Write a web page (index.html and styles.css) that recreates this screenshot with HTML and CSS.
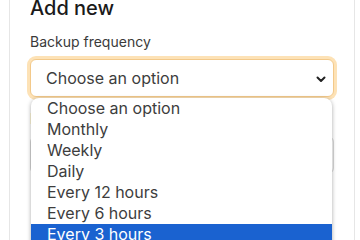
FILE: index.html
```html
<!DOCTYPE html>
<html lang="en">
<head>
<meta charset="UTF-8" />
<meta name="viewport" content="width=device-width,initial-scale=1.0" />
<title>Add new backup</title>
<link rel="stylesheet" href="styles.css">
</head>
<body>

<div class="card">
  <h2>Add new</h2>

  <!-- Backup frequency picker, shown open -->
  <div class="field">
    <label for="freq">Backup frequency</label>
    <div class="select-wrap">
      <div class="select focus" id="freq">
        <span>Choose an option</span>
        <svg class="chevron" width="12" height="8" viewBox="0 0 12 8"><path d="M2.5 2.5l3.5 3.5 3.5-3.5" fill="none" stroke="#222" stroke-width="2" stroke-linecap="round" stroke-linejoin="round"/></svg>
      </div>
      <ul class="options">
        <li>Choose an option</li>
        <li>Monthly</li>
        <li>Weekly</li>
        <li>Daily</li>
        <li>Every 12 hours</li>
        <li>Every 6 hours</li>
        <li class="active">Every 3 hours</li>
        <li>Every hour</li>
      </ul>
    </div>
  </div>

  <div class="field">
    <label>Retention</label>
    <div class="select"><span>Choose an option</span></div>
  </div>
</div>

</body>
</html>
```

FILE: styles.css
```css
:root{
  --text:#1c1c1c;--muted:#3a3a3a;--ring:#fde2b6;--border:#e6e6e6;--pick:#1a62d0
}
*{box-sizing:border-box;margin:0;padding:0}
body{
  font-family:Inter,"Noto Sans",sans-serif;
  background:#fff;color:var(--text);
  height:240px;overflow:hidden
}
.card{
  margin:-4px 0 0 9px;width:346px;height:400px;
  border:1px solid var(--border);border-top:none;
  padding:0 20px
}
h2{font-size:20px;font-weight:500;line-height:24px;color:#1a1a1a}
.field{margin-top:13px}
label{display:block;font-size:14px;line-height:18px;color:var(--muted);margin-bottom:8px}
.select-wrap{position:relative}
.select{
  display:flex;align-items:center;justify-content:space-between;
  height:38px;padding:0 6px 0 15px;
  border:1px solid #d8d8d8;border-radius:6px;
  font-size:16px;color:#3d3d3d;background:#fff
}
.select.focus{border-color:#f3c98a;box-shadow:0 0 0 3px var(--ring)}
.chevron{margin-top:1px}
.options{
  position:absolute;left:1px;right:2px;top:39px;
  list-style:none;background:#fff;
  border-radius:8px 8px 0 0;
  box-shadow:0 1px 4px rgba(0,0,0,.35);
  overflow:hidden;z-index:2
}
.options li{
  height:21px;line-height:21px;padding-left:16px;
  font-size:16px;color:#3d3d3d
}
.options li.active{background:var(--pick);color:#fff}
```
